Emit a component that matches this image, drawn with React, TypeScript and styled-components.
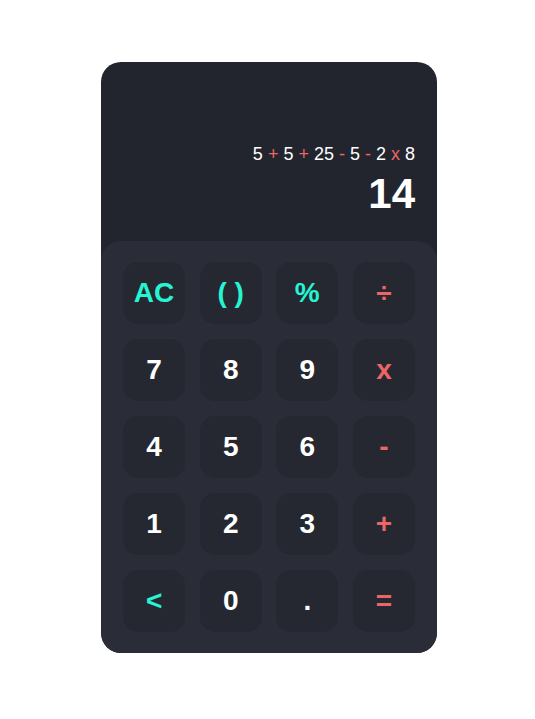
import React from "react";
import styled, { createGlobalStyle } from "styled-components";

const GlobalStyle = createGlobalStyle`
  html, body {
    margin: 0;
    padding: 0;
    background: #ffffff;
    font-family: "Liberation Sans", Arial, sans-serif;
  }
`;

const Page = styled.div`
  display: flex;
  justify-content: center;
  padding-top: 62px;
  padding-left: 3px;
`;

const Card = styled.div`
  width: 336px;
  background: #22252d;
  border-radius: 20px;
  overflow: hidden;
  display: flex;
  flex-direction: column;
`;

const Display = styled.div`
  height: 179px;
  box-sizing: border-box;
  display: flex;
  flex-direction: column;
  justify-content: flex-end;
  align-items: flex-end;
  padding: 0 22px 26px;
  gap: 10px;
`;

const Expression = styled.div`
  font-size: 18px;
  line-height: 1;
  color: #ffffff;
  white-space: pre;
`;

const Op = styled.span`
  color: #eb6666;
`;

const Result = styled.div`
  font-size: 42px;
  font-weight: 700;
  line-height: 1;
  color: #ffffff;
`;

const Keypad = styled.div`
  background: #2a2d37;
  border-radius: 20px;
  padding: 21px 22px;
  display: grid;
  grid-template-columns: repeat(4, 1fr);
  grid-auto-rows: 62px;
  gap: 15px 14.5px;
`;

type Tone = "num" | "fn" | "op";

const toneColor: Record<Tone, string> = {
  num: "#ffffff",
  fn: "#26f4d3",
  op: "#eb6666",
};

const Key = styled.button<{ $tone: Tone }>`
  border: none;
  margin: 0;
  padding: 0;
  background: #252830;
  border-radius: 15px;
  font-family: "Liberation Sans", Arial, sans-serif;
  font-size: 28px;
  font-weight: 700;
  color: ${(p) => toneColor[p.$tone]};
  display: flex;
  align-items: center;
  justify-content: center;
  cursor: pointer;
`;

const keys: { label: string; tone: Tone }[] = [
  { label: "AC", tone: "fn" },
  { label: "( )", tone: "fn" },
  { label: "%", tone: "fn" },
  { label: "÷", tone: "op" },
  { label: "7", tone: "num" },
  { label: "8", tone: "num" },
  { label: "9", tone: "num" },
  { label: "x", tone: "op" },
  { label: "4", tone: "num" },
  { label: "5", tone: "num" },
  { label: "6", tone: "num" },
  { label: "-", tone: "op" },
  { label: "1", tone: "num" },
  { label: "2", tone: "num" },
  { label: "3", tone: "num" },
  { label: "+", tone: "op" },
  { label: "<", tone: "fn" },
  { label: "0", tone: "num" },
  { label: ".", tone: "num" },
  { label: "=", tone: "op" },
];

export default function App() {
  return (
    <>
      <GlobalStyle />
      <Page>
        <Card>
          <Display>
            <Expression>
              5 <Op>+</Op> 5 <Op>+</Op> 25 <Op>-</Op> 5 <Op>-</Op> 2 <Op>x</Op> 8
            </Expression>
            <Result>14</Result>
          </Display>
          <Keypad>
            {keys.map((k) => (
              <Key key={k.label} $tone={k.tone}>
                {k.label}
              </Key>
            ))}
          </Keypad>
        </Card>
      </Page>
    </>
  );
}
